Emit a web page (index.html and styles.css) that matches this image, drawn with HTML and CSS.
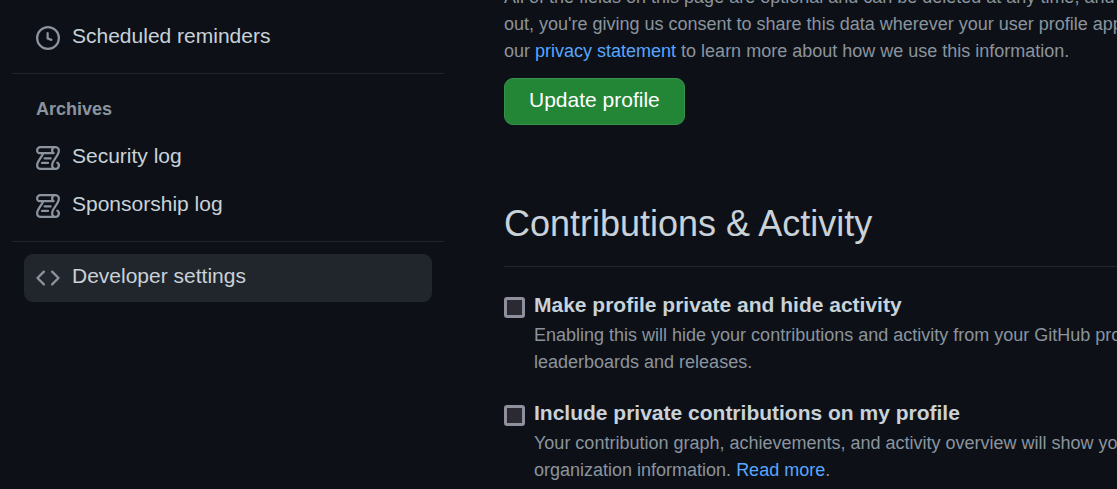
FILE: index.html
```html
<!DOCTYPE html>
<html lang="en">
<head>
<meta charset="utf-8">
<title>Profile settings</title>
<link rel="stylesheet" href="styles.css">
</head>
<body>
<svg class="sprite" aria-hidden="true">
  <symbol id="icon-log" viewBox="0 0 16 16"><path d="M5 8.25a.75.75 0 01.75-.75h4a.75.75 0 010 1.5h-4A.75.75 0 015 8.25zM4 10.5A.75.75 0 004 12h4a.75.75 0 000-1.5H4z"/><path fill-rule="evenodd" d="M13-.005c1.654 0 3 1.328 3 3 0 .982-.338 1.933-.783 2.818-.443.879-1.028 1.758-1.582 2.588l-.011.017c-.568.853-1.104 1.659-1.501 2.446-.398.789-.623 1.494-.623 2.136a1.5 1.5 0 102.333-1.248.75.75 0 01.834-1.246A3 3 0 0113 16H3a3 3 0 01-3-3c0-1.582.891-3.135 1.777-4.506.209-.322.418-.637.623-.946.473-.709.923-1.386 1.287-2.048H2.51c-.576 0-1.381-.133-1.907-.783A2.68 2.68 0 010 2.995a3 3 0 013-3h10zm0 1.5a1.5 1.5 0 00-1.5 1.5c0 .476.223.834.667 1.132A.75.75 0 0111.75 5.5H5.368c-.467 1.003-1.141 2.015-1.773 2.963-.192.289-.381.571-.558.845C2.13 10.711 1.5 11.916 1.5 13A1.5 1.5 0 003 14.5h7.401A2.989 2.989 0 0110 13c0-.979.338-1.928.784-2.812.441-.874 1.023-1.748 1.575-2.576l.017-.026c.568-.853 1.103-1.658 1.501-2.448.398-.79.623-1.497.623-2.143 0-.838-.669-1.5-1.5-1.5zm-10 0a1.5 1.5 0 00-1.5 1.5c0 .321.1.569.27.778.097.12.325.227.74.227h7.674A2.737 2.737 0 0110 2.995c0-.546.146-1.059.401-1.5H3z"/></symbol>
</svg>
<div class="page">
  <nav class="sidebar" aria-label="Settings">
    <a class="nav-item" href="#reminders">
      <svg class="icon" viewBox="0 0 16 16" aria-hidden="true"><circle cx="8" cy="8" r="7.25"/><path d="M7.75 4.75v3.5l2.5 1"/></svg>
      <span class="nav-label">Scheduled reminders</span>
    </a>
    <hr class="divider">
    <h2 class="nav-heading">Archives</h2>
    <a class="nav-item" href="#security">
      <svg class="icon solid" aria-hidden="true"><use href="#icon-log"/></svg>
      <span class="nav-label">Security log</span>
    </a>
    <a class="nav-item" href="#sponsorship">
      <svg class="icon solid" aria-hidden="true"><use href="#icon-log"/></svg>
      <span class="nav-label">Sponsorship log</span>
    </a>
    <hr class="divider">
    <a class="nav-item active" href="#developer">
      <svg class="icon" viewBox="0 0 16 16" aria-hidden="true"><path d="M5.25 3.75L1 8l4.25 4.25M10.75 3.75L15 8l-4.25 4.25"/></svg>
      <span class="nav-label">Developer settings</span>
    </a>
  </nav>
  <main class="content">
    <p class="note">All of the fields on this page are optional and can be deleted at any time, and<br>out, you're giving us consent to share this data wherever your user profile appears.<br>our <a class="link" href="#privacy">privacy statement</a> to learn more about how we use this information.</p>
    <button class="button" type="button">Update profile</button>
    <h1 class="title">Contributions &amp; Activity</h1>
    <div class="option">
      <input class="check" type="checkbox" id="private">
      <div class="option-body">
        <label class="option-label" for="private">Make profile private and hide activity</label>
        <p class="note">Enabling this will hide your contributions and activity from your GitHub profile<br>leaderboards and releases.</p>
      </div>
    </div>
    <div class="option">
      <input class="check" type="checkbox" id="contributions">
      <div class="option-body">
        <label class="option-label" for="contributions">Include private contributions on my profile</label>
        <p class="note">Your contribution graph, achievements, and activity overview will show your<br>organization information. <a class="link" href="#more">Read more</a>.</p>
      </div>
    </div>
  </main>
</div>
</body>
</html>
```

FILE: styles.css
```css
* { box-sizing: border-box; }
html { background: #0d1117; }
body {
  margin: 0;
  overflow: hidden;
  color: #c9d1d9;
  font-family: "Liberation Sans", Arial, sans-serif;
  font-size: 21px;
}
.sprite { display: none; }
.page {
  display: grid;
  grid-template-columns: 432px minmax(0, 1fr);
  column-gap: 60px;
  padding-left: 12px;
}
.sidebar { padding-top: 14px; }
.nav-item {
  display: flex;
  align-items: center;
  gap: 12px;
  height: 48px;
  margin: 0 12px;
  padding: 0 12px;
  border-radius: 9px;
  color: #c9d1d9;
  text-decoration: none;
}
.nav-item.active { background: #21262d; }
.nav-label { padding-bottom: 4px; line-height: 30px; }
.icon {
  width: 24px;
  height: 24px;
  fill: none;
  stroke: #8b949e;
  stroke-width: 1.5;
  stroke-linecap: round;
  stroke-linejoin: round;
}
.icon.solid { fill: #8b949e; stroke: none; }
.divider {
  height: 1px;
  margin: 11px 0 12px;
  border: 0;
  background: #21262d;
}
.nav-heading {
  margin: 0;
  padding: 10px 24px 11px;
  color: #8b949e;
  font-size: 18px;
  line-height: 27px;
}
.content { margin-top: -16px; white-space: nowrap; }
.note {
  margin: 0;
  color: #8b949e;
  font-size: 18px;
  line-height: 27px;
}
.link { color: #58a6ff; text-decoration: none; }
.button {
  display: block;
  height: 47px;
  margin-top: 13px;
  padding: 0 24px 4px;
  border: 1px solid #36914a;
  border-radius: 9px;
  background: #238636;
  color: #fff;
  font: inherit;
}
.title {
  margin: 72px 0 24px;
  padding-bottom: 15px;
  border-bottom: 1px solid #21262d;
  font-size: 36px;
  font-weight: 400;
  line-height: 54px;
}
.option { display: flex; gap: 9px; margin-bottom: 23px; }
.check {
  flex: none;
  appearance: none;
  width: 21px;
  height: 21px;
  margin: 6px 0 0;
  border: 3px solid #8f8f9d;
  border-radius: 3px;
  background: #2b2a33;
}
.option-label {
  display: block;
  padding-bottom: 3px;
  font-weight: 700;
  line-height: 28px;
}
```
